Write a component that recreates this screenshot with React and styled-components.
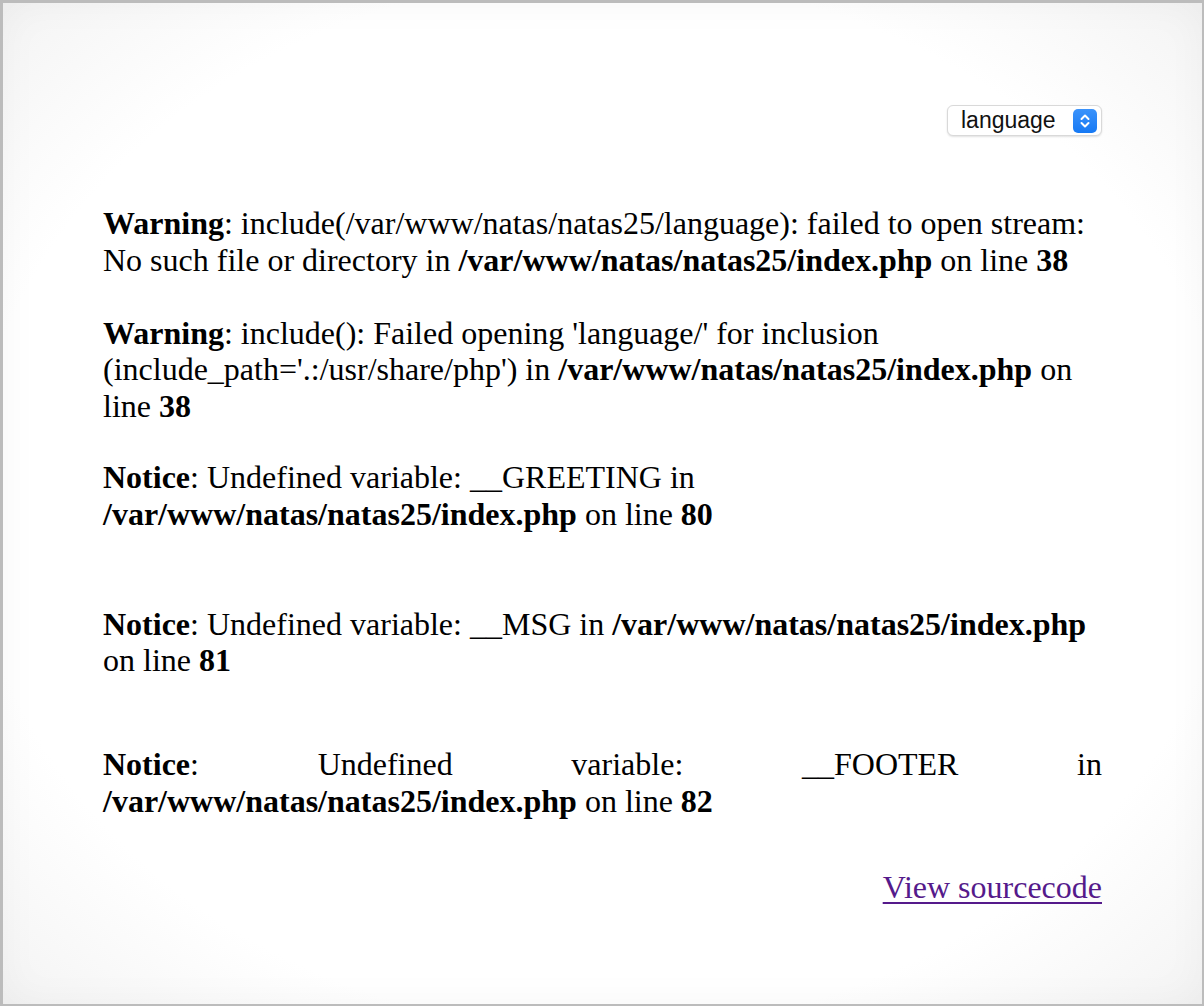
import styled, { createGlobalStyle } from "styled-components";

const GlobalStyle = createGlobalStyle`
    html, body{
        margin: 0;
        padding: 0;
        background: #ffffff;
    }
`

export default function App(){
    return (
        <>
            <GlobalStyle />
            <Frame>
                <Content>
                    <LangBar>
                        <LangSelect>
                            <span>language</span>
                            <Stepper>
                                <svg width="12" height="16" viewBox="0 0 12 16" fill="none" stroke="#ffffff" strokeWidth="2" strokeLinecap="round" strokeLinejoin="round">
                                    <polyline points="2.5,6 6,2.5 9.5,6" />
                                    <polyline points="2.5,10 6,13.5 9.5,10" />
                                </svg>
                            </Stepper>
                        </LangSelect>
                    </LangBar>

                    <Message gap={69}>
                        <b>Warning</b>: include(/var/www/natas/natas25/language): failed to open stream: No such file or directory in <b>/var/www/natas/natas25/index.php</b> on line <b>38</b>
                    </Message>
                    <Message gap={36}>
                        <b>Warning</b>: include(): Failed opening 'language/' for inclusion (include_path='.:/usr/share/php') in <b>/var/www/natas/natas25/index.php</b> on line <b>38</b>
                    </Message>
                    <Message gap={34}>
                        <b>Notice</b>: Undefined variable: __GREETING in <b>/var/www/natas/natas25/index.php</b> on line <b>80</b>
                    </Message>
                    <Message gap={73}>
                        <b>Notice</b>: Undefined variable: __MSG in <b>/var/www/natas/natas25/index.php</b> on line <b>81</b>
                    </Message>
                    <Message gap={67} justify>
                        <b>Notice</b>: Undefined variable: __FOOTER in <b>/var/www/natas/natas25/index.php</b> on line <b>82</b>
                    </Message>

                    <ViewSource>
                        <a href="#">View sourcecode</a>
                    </ViewSource>
                </Content>
            </Frame>
        </>
    )
}

const Frame = styled.div`
    box-sizing: border-box;
    width: 100%;
    height: 100vh;
    border-style: solid;
    border-color: #bcbcbc;
    border-width: 3px 2px 2px 3px;
    background: radial-gradient(ellipse 75% 75% at 50% 50%, #ffffff 70%, #f1f1f1 100%);
    box-shadow: inset 0 0 40px rgba(0, 0, 0, 0.04);
    overflow: hidden;
`
const Content = styled.div`
    width: 999px;
    margin: 0 auto;
    padding-top: 102px;
    font-family: "Liberation Serif", "Times New Roman", serif;
    font-size: 32px;
    color: #000000;
`
const LangBar = styled.div`
    display: flex;
    justify-content: flex-end;
`
const LangSelect = styled.div`
    box-sizing: border-box;
    width: 155px;
    height: 31px;
    display: flex;
    align-items: center;
    justify-content: space-between;
    padding: 0 4px 0 13px;
    background: #ffffff;
    border: 1px solid #d9d9d9;
    border-radius: 6px;
    box-shadow: 0 1px 2px rgba(0, 0, 0, 0.12);
    font-family: "Liberation Sans", Arial, sans-serif;
    font-size: 23px;
    color: #111111;
`
const Stepper = styled.div`
    width: 24px;
    height: 24px;
    border-radius: 5px;
    background: linear-gradient(#3b93fb, #1679f4);
    display: flex;
    align-items: center;
    justify-content: center;
`
const Message = styled.p`
    margin: ${props => props.gap}px 0 0 0;
    line-height: 36.8px;
    text-align: ${props => props.justify ? "justify" : "left"};
    text-align-last: left;
`
const ViewSource = styled.div`
    margin-top: 49px;
    text-align: right;
    line-height: 36.8px;
    a{
        color: #551a8b;
        text-decoration: underline;
        text-underline-offset: 4px;
        text-decoration-thickness: 2px;
    }
`
